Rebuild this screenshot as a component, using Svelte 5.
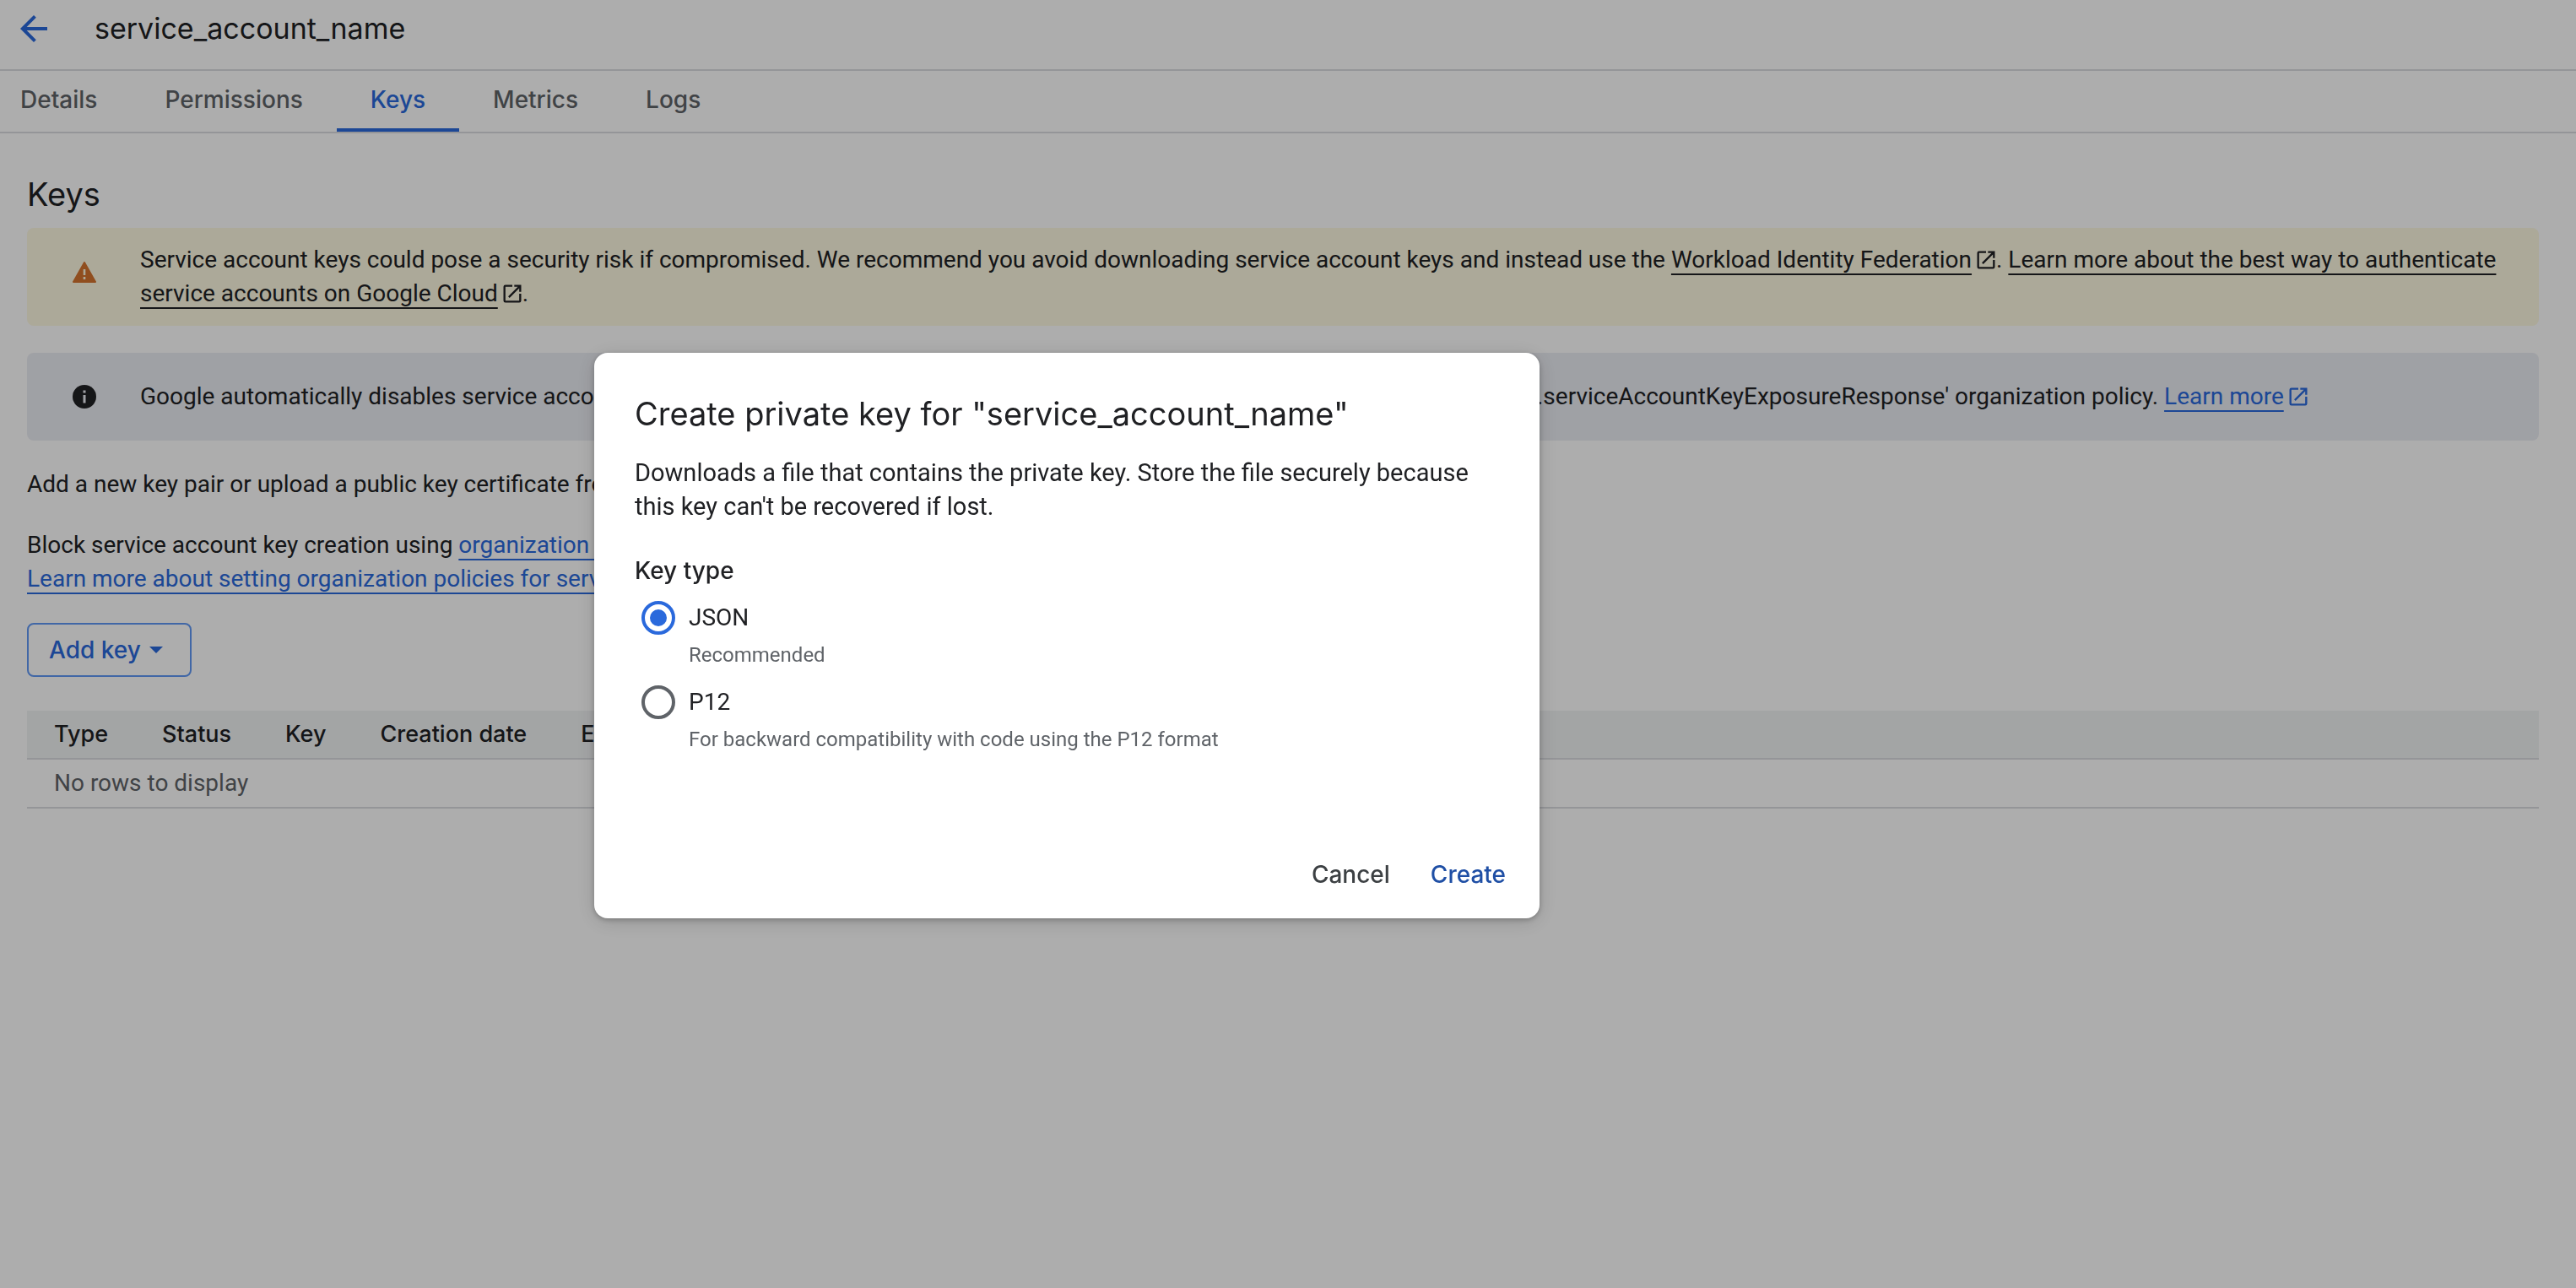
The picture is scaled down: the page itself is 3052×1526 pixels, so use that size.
<script lang="ts">
  const tabs = ['Details', 'Permissions', 'Keys', 'Metrics', 'Logs'];
  const activeTab = 'Keys';
  const columns = ['Type', 'Status', 'Key', 'Creation date', 'Expiration date'];
  const keyTypes = [
    { id: 'json', label: 'JSON', hint: 'Recommended' },
    { id: 'p12', label: 'P12', hint: 'For backward compatibility with code using the P12 format' },
  ];
  let keyType = $state('json');
</script>

{#snippet external()}
  <svg class="external" viewBox="0 0 24 24" aria-hidden="true">
    <path fill="currentColor" d="M19 19H5V5h7V3H5a2 2 0 0 0-2 2v14a2 2 0 0 0 2 2h14a2 2 0 0 0 2-2v-7h-2v7zM14 3v2h3.59l-9.83 9.83 1.41 1.41L19 6.41V10h2V3h-7z" />
  </svg>
{/snippet}

<div class="page">
  <header>
    <button class="back" aria-label="Back">
      <svg viewBox="0 0 24 24" aria-hidden="true">
        <path fill="currentColor" d="M20 11H7.83l5.59-5.59L12 4l-8 8 8 8 1.41-1.41L7.83 13H20v-2z" />
      </svg>
    </button>
    <h1>service_account_name</h1>
  </header>

  <nav>
    {#each tabs as tab}
      <a href="#{tab.toLowerCase()}" class:active={tab === activeTab}>{tab}</a>
    {/each}
  </nav>

  <main>
    <h2>Keys</h2>

    <div class="banner warning">
      <svg viewBox="0 0 36 36" aria-hidden="true">
        <path class="sign" d="M18 1 31 24H5z" />
        <path class="mark" d="M16.700 9h2.600v7h-2.600zM16.700 18h2.600v3h-2.600z" />
      </svg>
      <p>
        Service account keys could pose a security risk if compromised. We recommend you avoid downloading service account keys and instead use the <a href="#federation">Workload Identity Federation</a>{@render external()}. <a href="#authenticate">Learn more about the best way to authenticate service accounts on Google Cloud</a>{@render external()}.
      </p>
    </div>

    <div class="banner info">
      <svg viewBox="0 0 36 36" aria-hidden="true">
        <circle cx="18" cy="18" r="14" fill="currentColor" />
        <path class="mark" d="M16.500 10.500h3v3h-3zM16.500 16h3v9.500h-3z" />
      </svg>
      <p>
        Google automatically disables service account keys detected in public repositories. You can customize this behavior by using the 'iam.serviceAccountKeyExposureResponse' organization policy. <a href="#exposure">Learn more</a><span class="blue">{@render external()}</span>
      </p>
    </div>

    <p class="text">Add a new key pair or upload a public key certificate from an existing key pair.</p>
    <p class="text">
      Block service account key creation using <a href="#policies">organization policies</a>.<br />
      <a href="#learn">Learn more about setting organization policies for service accounts</a>
    </p>

    <button class="add">
      Add key
      <svg viewBox="0 0 16 8" aria-hidden="true"><path fill="currentColor" d="M0 0h16L8 8z" /></svg>
    </button>

    <table>
      <thead>
        <tr>
          {#each columns as column}<th scope="col">{column}</th>{/each}
        </tr>
      </thead>
      <tbody>
        <tr><td colspan={columns.length}>No rows to display</td></tr>
      </tbody>
    </table>
  </main>
</div>

<div class="overlay">
  <div class="dialog" role="dialog" aria-modal="true" aria-labelledby="dialog-title">
    <h2 id="dialog-title">Create private key for "service_account_name"</h2>
    <p>Downloads a file that contains the private key. Store the file securely because this key can't be recovered if lost.</p>
    <fieldset>
      <legend>Key type</legend>
      {#each keyTypes as type}
        <div class="option">
          <input type="radio" name="key-type" id={type.id} value={type.id} bind:group={keyType} aria-describedby="{type.id}-hint" />
          <label for={type.id}>{type.label}</label>
          <span class="hint" id="{type.id}-hint">{type.hint}</span>
        </div>
      {/each}
    </fieldset>
    <div class="actions">
      <button>Cancel</button>
      <button class="primary">Create</button>
    </div>
  </div>
</div>

<style>
  :global(body) {
    margin: 0;
    background: #fff;
  }
  .page,
  .overlay {
    --body: Roboto, 'Liberation Sans', sans-serif;
    --display: Inter, 'Open Sans', sans-serif;
    --ink: #202124;
    --muted: #5f6368;
    --blue: #2a69dc;
    --line: #dadce0;
    color: var(--ink);
    font: 400 28px/40px var(--body);
  }
  .page {
    min-height: 100vh;
  }
  h1,
  h2,
  p {
    margin: 0;
  }
  button {
    font: 500 28px/40px var(--display);
    background: none;
    border: 0;
    cursor: pointer;
  }
  header {
    display: flex;
    align-items: center;
    gap: 48px;
    padding: 0 16px 14px;
    border-bottom: 2px solid var(--line);
  }
  .back {
    display: flex;
    padding: 10px 0;
    color: var(--blue);
  }
  .back svg {
    width: 48px;
    height: 48px;
  }
  h1 {
    font: 400 34px/48px var(--display);
  }
  nav {
    display: flex;
    margin-left: -16px;
    border-bottom: 2px solid var(--line);
  }
  nav a {
    padding: 14px 40px;
    border-bottom: 4px solid transparent;
    color: var(--muted);
    font: 500 28px/40px var(--display);
    text-decoration: none;
  }
  nav a.active {
    color: var(--blue);
    border-color: var(--blue);
  }
  main {
    padding: 48px 44px 0 32px;
  }
  main h2,
  .dialog h2 {
    font: 400 38px/48px var(--display);
  }
  main h2 {
    margin-bottom: 16px;
  }
  .banner {
    display: flex;
    align-items: center;
    gap: 48px;
    margin-bottom: 32px;
    padding: 18px 32px 18px 50px;
    border-radius: 8px;
  }
  .banner > svg {
    flex: none;
    width: 36px;
    height: 36px;
  }
  .warning {
    background: #fef9e2;
    --mark: #fef9e2;
  }
  .info {
    padding-block: 32px;
    background: #ebedf3;
    --mark: #ebedf3;
  }
  .sign {
    fill: #d5742f;
    stroke: #d5742f;
    stroke-width: 2;
    stroke-linejoin: round;
  }
  .mark {
    fill: var(--mark);
  }
  a {
    color: var(--blue);
    text-decoration: underline 2px;
    text-underline-offset: 7px;
    text-decoration-skip-ink: none;
  }
  .warning a {
    color: inherit;
  }
  .blue {
    color: var(--blue);
  }
  .external {
    width: 28px;
    height: 28px;
    margin: 0 -2px 0 3px;
    vertical-align: -5px;
  }
  .text {
    margin-bottom: 32px;
  }
  .add {
    display: flex;
    align-items: center;
    gap: 10px;
    padding: 10px 32px 10px 24px;
    border: 2px solid #6199f5;
    border-radius: 8px;
    color: var(--blue);
  }
  .add svg {
    width: 16px;
    height: 8px;
  }
  table {
    width: 100%;
    margin-top: 40px;
    border-collapse: separate;
    border-spacing: 0;
    text-align: left;
  }
  th,
  td {
    padding: 8px 32px;
    border-bottom: 2px solid var(--line);
  }
  th {
    background: #f1f3f4;
    font: 500 27px/40px var(--display);
    white-space: nowrap;
  }
  th:last-child {
    width: 100%;
  }
  td {
    color: var(--muted);
  }
  .overlay {
    position: fixed;
    inset: 0;
    background: rgb(0 0 0 / 32%);
    padding: 418px 32px 32px 704px;
  }
  .dialog {
    box-sizing: border-box;
    max-width: 1120px;
    padding: 48px 24px 20px 48px;
    border-radius: 16px;
    background: #fff;
    box-shadow: 0 2px 6px rgb(0 0 0 / 24%), 0 4px 24px rgb(0 0 0 / 14%);
  }
  .dialog > p {
    margin: 26px 48px 36px 0;
    font-size: 29px;
  }
  fieldset {
    margin: 0;
    padding: 0;
    border: 0;
  }
  legend {
    padding: 0;
    margin-bottom: 16px;
    font: 500 28px/40px var(--display);
  }
  .option {
    display: grid;
    grid-template-columns: 40px 1fr;
    column-gap: 16px;
    padding: 0 8px 20px;
  }
  .option input {
    appearance: none;
    box-sizing: border-box;
    width: 40px;
    height: 40px;
    margin: 0;
    padding: 6px;
    border: 4px solid var(--muted);
    border-radius: 50%;
    background-clip: content-box;
  }
  .option input:checked {
    border-color: var(--blue);
    background-color: var(--blue);
  }
  .hint {
    grid-column: 2;
    padding-top: 8px;
    color: var(--muted);
    font-size: 24px;
    line-height: 32px;
  }
  .actions {
    display: flex;
    justify-content: flex-end;
    gap: 16px;
    margin-top: 92px;
  }
  .actions button {
    padding: 12px 16px;
    color: #3c4043;
  }
  .actions .primary {
    color: #1f4fa5;
  }
</style>
